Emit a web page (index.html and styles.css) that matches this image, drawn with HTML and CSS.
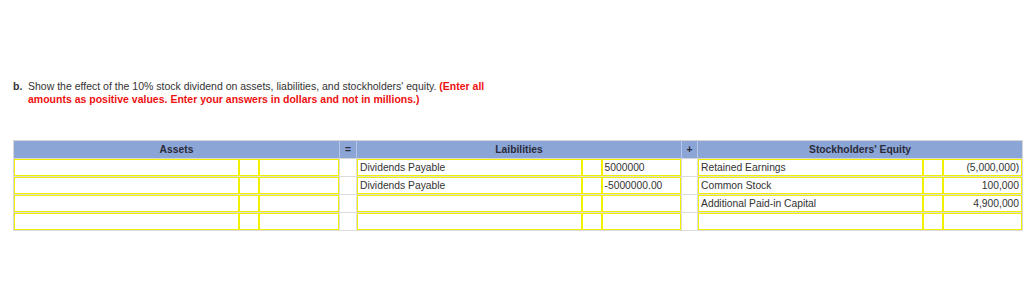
FILE: index.html
```html
<!DOCTYPE html>
<html>
<head>
<meta charset="utf-8">
<link rel="stylesheet" href="styles.css">
</head>
<body>
<div class="page">
  <div class="question">
    <span class="label">b.</span>
    <p class="text">Show the effect of the 10% stock dividend on assets, liabilities, and stockholders' equity. <strong class="note">(Enter all amounts as positive values. Enter your answers in dollars and not in millions.)</strong></p>
  </div>
  <table class="ledger">
    <colgroup>
      <col class="c-name"><col class="c-mid"><col class="c-amt3">
      <col class="c-op1">
      <col class="c-name2"><col class="c-mid"><col class="c-amt">
      <col class="c-op">
      <col class="c-name2"><col class="c-mid"><col class="c-amt">
    </colgroup>
    <thead>
      <tr>
        <th colspan="3">Assets</th>
        <th class="op">=</th>
        <th colspan="3">Laibilities</th>
        <th class="op">+</th>
        <th colspan="3">Stockholders' Equity</th>
      </tr>
    </thead>
    <tbody>
      <tr>
        <td class="in"><div></div></td><td class="in"><div></div></td><td class="in"><div></div></td>
        <td class="op"></td>
        <td class="in"><div>Dividends Payable</div></td><td class="in"><div></div></td><td class="in"><div>5000000</div></td>
        <td class="op"></td>
        <td class="in"><div>Retained Earnings</div></td><td class="in"><div></div></td><td class="in num"><div>(5,000,000)</div></td>
      </tr>
      <tr>
        <td class="in"><div></div></td><td class="in"><div></div></td><td class="in"><div></div></td>
        <td class="op"></td>
        <td class="in"><div>Dividends Payable</div></td><td class="in"><div></div></td><td class="in"><div>-5000000.00</div></td>
        <td class="op"></td>
        <td class="in"><div>Common Stock</div></td><td class="in"><div></div></td><td class="in num"><div>100,000</div></td>
      </tr>
      <tr>
        <td class="in"><div></div></td><td class="in"><div></div></td><td class="in"><div></div></td>
        <td class="op"></td>
        <td class="in"><div></div></td><td class="in"><div></div></td><td class="in"><div></div></td>
        <td class="op"></td>
        <td class="in"><div>Additional Paid-in Capital</div></td><td class="in"><div></div></td><td class="in num"><div>4,900,000</div></td>
      </tr>
      <tr>
        <td class="in"><div></div></td><td class="in"><div></div></td><td class="in"><div></div></td>
        <td class="op"></td>
        <td class="in"><div></div></td><td class="in"><div></div></td><td class="in"><div></div></td>
        <td class="op"></td>
        <td class="in"><div></div></td><td class="in"><div></div></td><td class="in num"><div></div></td>
      </tr>
    </tbody>
  </table>
</div>
</body>
</html>
```
FILE: styles.css
```css
html, body {
  margin: 0;
  padding: 0;
  background: #ffffff;
}
.page {
  padding: 80px 0 0 13px;
  font-family: "Liberation Sans", Arial, sans-serif;
  font-size: 10.5px;
  color: #333333;
}
.question {
  display: flex;
  line-height: 13px;
  width: 490px;
}
.label {
  font-weight: bold;
  width: 15px;
  flex: none;
}
.text {
  margin: 0;
}
.note {
  color: #ee1111;
}
.ledger {
  margin-top: 34px;
  border-collapse: collapse;
  table-layout: fixed;
  width: 1010px;
  border: 1px solid #d6d6d6;
  font-size: 10.3px;
}
.c-name { width: 225px; }
.c-name2 { width: 225px; }
.c-mid { width: 20px; }
.c-amt3 { width: 81px; }
.c-amt { width: 80px; }
.c-op1 { width: 17px; }
.c-op { width: 16px; }
.ledger th {
  background: #8aa5d6;
  color: #2b2b3a;
  font-weight: bold;
  height: 17px;
  padding: 0;
  border-left: 1px solid #b9c6e4;
  border-bottom: 1px solid #d6d6d6;
}
.ledger th:first-child {
  border-left: none;
}
.ledger td {
  padding: 0;
  height: 17px;
  border-bottom: 1px solid #dcdcdc;
}
.ledger td.op {
  border-left: 1px solid #dcdcdc;
  border-right: 1px solid #dcdcdc;
}
.ledger td.in > div {
  box-sizing: border-box;
  height: 17px;
  border: 1px solid #f0f000;
  padding: 0 2px;
  line-height: 15px;
  white-space: nowrap;
  overflow: hidden;
  color: #333333;
}
.ledger td.num > div {
  text-align: right;
}
```
